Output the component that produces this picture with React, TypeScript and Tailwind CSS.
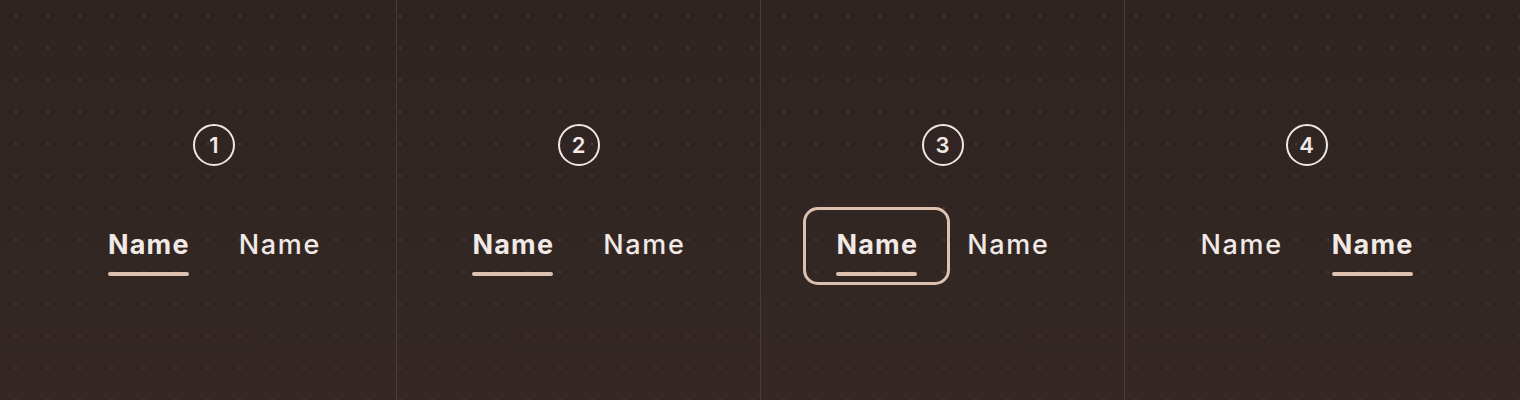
import React from 'react';

type Variant = {
  id: number;
  active: number;
  focused?: number;
};

const variants: Variant[] = [
  { id: 1, active: 0 },
  { id: 2, active: 0 },
  { id: 3, active: 0, focused: 0 },
  { id: 4, active: 1 },
];

const font = { fontFamily: 'Inter, "Noto Sans", sans-serif' };

function Tab({ label, active, focused }: { label: string; active: boolean; focused: boolean }) {
  return (
    <button className="relative flex flex-col items-stretch text-[#f1e9e5]">
      {focused && (
        <span className="absolute -left-[33px] -right-[33px] -top-[22px] -bottom-[9px] rounded-[15px] border-[3px] border-[#dcc1b1]" />
      )}
      <span
        className={`-mr-[1px] text-[27px] leading-[32px] ${
          active ? 'font-bold tracking-[1.2px]' : 'font-medium tracking-[1.7px]'
        }`}
      >
        {label}
      </span>
      <span className={`mt-[11px] h-[4px] rounded-full ${active ? 'bg-[#dcc1b1]' : 'bg-transparent'}`} />
    </button>
  );
}

function Panel({ v, first }: { v: Variant; first: boolean }) {
  return (
    <div className={`flex flex-col items-center pt-[124px] ${first ? '' : 'border-l border-[#4a3d39]'}`}>
      <div className="flex h-[42px] w-[42px] items-center justify-center rounded-full border-2 border-[#efe7e3] text-[22px] font-semibold text-[#f1e9e5]">
        {v.id}
      </div>
      <div className="mt-[63px] flex gap-[50px]">
        {['Name', 'Name'].map((label, i) => (
          <Tab key={i} label={label} active={v.active === i} focused={v.focused === i} />
        ))}
      </div>
    </div>
  );
}

export default function App() {
  return (
    <div className="h-[400px] w-[1520px] bg-[linear-gradient(to_bottom,#2e2422,#352824)]" style={font}>
      <div className="grid h-full grid-cols-4 bg-[radial-gradient(circle,#4b403c_1px,transparent_1.5px)] bg-[length:32px_32px] px-[32px]">
        {variants.map((v, i) => (
          <Panel key={v.id} v={v} first={i === 0} />
        ))}
      </div>
    </div>
  );
}
